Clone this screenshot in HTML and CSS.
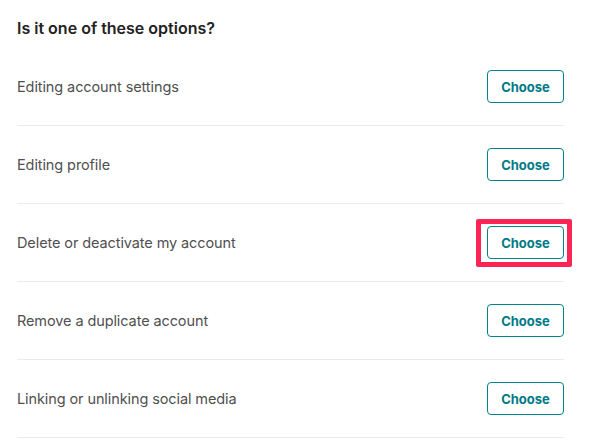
FILE: index.html
```html
<!DOCTYPE html>
<html lang="en">
<head>
<meta charset="utf-8">
<title>Options</title>
<link rel="stylesheet" href="styles.css">
</head>
<body>
<main class="panel">
  <h2 class="title">Is it one of these options?</h2>
  <ul class="options">
    <li class="option"><span class="label">Editing account settings</span><button class="choose">Choose</button></li>
    <li class="option"><span class="label">Editing profile</span><button class="choose">Choose</button></li>
    <li class="option"><span class="label">Delete or deactivate my account</span><span class="highlight"><button class="choose">Choose</button></span></li>
    <li class="option"><span class="label">Remove a duplicate account</span><button class="choose">Choose</button></li>
    <li class="option"><span class="label">Linking or unlinking social media</span><button class="choose">Choose</button></li>
  </ul>
</main>
</body>
</html>
```
FILE: styles.css
```css
* { box-sizing: border-box; }
html, body { margin: 0; padding: 0; background: #fff; }
body { font-family: Inter, "Noto Sans", sans-serif; }
.panel { width: 564px; padding-left: 17px; }
.title {
  margin: 0;
  height: 48px;
  padding-top: 17px;
  font-size: 16px;
  font-weight: 600;
  color: #222;
  line-height: 22px;
}
.options { list-style: none; margin: 0; padding: 0; }
.option {
  height: 78px;
  border-bottom: 1px solid #ebebeb;
  display: flex;
  align-items: center;
  justify-content: space-between;
}
.label { font-size: 14.5px; color: #505050; letter-spacing: -0.1px; }
.choose {
  width: 77px;
  height: 33px;
  border: 1px solid #008489;
  border-radius: 4px;
  background: #fff;
  color: #007a87;
  font-family: inherit;
  font-size: 13px;
  font-weight: 700;
  padding: 0;
}
.highlight { position: relative; display: flex; }
.highlight::after {
  content: "";
  position: absolute;
  top: -7px; left: -11px; right: -8px; bottom: -8px;
  border: 5px solid #fb2454;
  border-radius: 2px;
}
```
